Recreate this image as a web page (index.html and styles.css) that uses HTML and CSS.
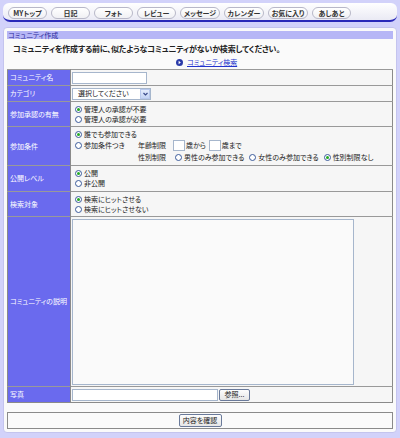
FILE: index.html
```html
<!DOCTYPE html>
<html lang="ja">
<head>
<meta charset="utf-8">
<link rel="stylesheet" href="styles.css">
</head>
<body>
<div class="nav">
  <span class="nb">MYトップ</span>
  <span class="nb">日記</span>
  <span class="nb">フォト</span>
  <span class="nb">レビュー</span>
  <span class="nb wide">メッセージ</span>
  <span class="nb wide">カレンダー</span>
  <span class="nb wide">お気に入り</span>
  <span class="nb">あしあと</span>
</div>
<div class="panel">
  <div class="title">コミュニティ作成</div>
  <p class="lead">コミュニティを作成する前に、似たようなコミュニティがないか検索してください。</p>
  <div class="search"><svg class="ico" width="7" height="7" viewBox="0 0 7 7"><circle cx="3.5" cy="3.5" r="3.5" fill="#2a3aa8"/><path d="M2.6 1.8 L4.8 3.5 L2.6 5.2 Z" fill="#fff"/></svg><a href="#">コミュニティ検索</a></div>
  <table class="form">
    <tr class="r16"><th>コミュニティ名</th><td><span class="txt w75"></span></td></tr>
    <tr class="r16"><th>カテゴリ</th><td><span class="sel">選択してください<span class="arr"><svg width="5" height="4" viewBox="0 0 5 4"><path d="M0.5 1 L2.5 3 L4.5 1" stroke="#3a4a8a" stroke-width="1.2" fill="none"/></svg></span></span></td></tr>
    <tr class="r25"><th>参加承認の有無</th><td>
      <div class="opt"><span class="rd on"></span>管理人の承認が不要</div>
      <div class="opt"><span class="rd"></span>管理人の承認が必要</div>
    </td></tr>
    <tr class="r39"><th>参加条件</th><td>
      <div class="opt"><span class="rd on"></span>誰でも参加できる</div>
      <div class="cond">
        <div class="opt c1"><span class="rd"></span>参加条件つき</div>
        <div class="sub">
          <div class="line"><span class="lbl">年齢制限</span><span class="txt w11"></span>歳から<span class="txt w11"></span>歳まで</div>
          <div class="line"><span class="lbl">性別制限</span><span class="opt"><span class="rd"></span>男性のみ参加できる</span><span class="opt"><span class="rd"></span>女性のみ参加できる</span><span class="opt"><span class="rd on"></span>性別制限なし</span></div>
        </div>
      </div>
    </td></tr>
    <tr class="r26"><th>公開レベル</th><td>
      <div class="opt"><span class="rd on"></span>公開</div>
      <div class="opt"><span class="rd"></span>非公開</div>
    </td></tr>
    <tr class="r25"><th>検索対象</th><td>
      <div class="opt"><span class="rd on"></span>検索にヒットさせる</div>
      <div class="opt"><span class="rd"></span>検索にヒットさせない</div>
    </td></tr>
    <tr class="r170"><th>コミュニティの説明</th><td><div class="area"></div></td></tr>
    <tr class="r16"><th>写真</th><td><div class="file"><span class="txt w146"></span><span class="btn">参照...</span></div></td></tr>
  </table>
  <div class="submit"><span class="btn">内容を確認</span></div>
</div>
</body>
</html>
```
FILE: styles.css
```css
* { box-sizing: border-box; }
html, body { margin: 0; padding: 0; }
body {
  background: #d2d2fa;
  font-family: "Noto Sans CJK JP", "Noto Sans", sans-serif;
  font-size: 7px;
  line-height: 1;
  color: #222;
  width: 400px;
  height: 438px;
  overflow: hidden;
  padding-top: 3px;
}
.nav {
  margin: 0 3px;
  height: 19px;
  background: linear-gradient(#ffffff, #eaeaf4);
  border-radius: 6px 6px 7px 7px;
  border-bottom: 2px solid #2a2ab8;
  display: flex;
  gap: 4px;
  padding: 4px 0 0 5px;
}
.nb {
  width: 39px;
  height: 12px;
  border: 1px solid #b8b8c8;
  border-radius: 6px;
  background: linear-gradient(#ffffff, #f0f0f4);
  font-weight: bold;
  font-size: 7px;
  color: #333;
  display: flex;
  align-items: center;
  justify-content: center;
  font-feature-settings: "palt";
}
.nb.wide { width: 40px; }
.panel {
  margin: 5px 3px 0;
  height: 406px;
  background: #fafafa;
  border: 1px solid #c4c4ee;
  border-radius: 4px;
  padding: 3px 3px 0 3px;
}
.title {
  height: 8px;
  background: #b6b6f6;
  color: #2a2a9a;
  font-size: 7px;
  line-height: 8px;
  padding-left: 1px;
  font-feature-settings: "palt";
}
.lead {
  margin: 5px 0 0 6px;
  font-size: 8px;
  line-height: 9px;
  font-weight: bold;
  color: #222;
  font-feature-settings: "palt";
  letter-spacing: -0.2px;
}
.search {
  margin-top: 5px;
  height: 8px;
  display: flex;
  align-items: center;
  padding-left: 169px;
  gap: 4px;
}
.search a {
  color: #2233cc;
  font-size: 7px;
  font-feature-settings: "palt";
}
.form {
  margin: 3px 0 0 0;
  width: 386px;
  border-collapse: collapse;
  border: 1px solid #8a8a8a;
}
.form th, .form td {
  border-top: 1px solid #999;
  padding: 0;
  vertical-align: middle;
}
.form th {
  width: 63px;
  background: #6a6aee;
  color: #fff;
  font-weight: normal;
  text-align: left;
  padding-left: 2px;
  font-size: 7px;
  font-feature-settings: "palt";
  border-right: 1px solid #8a8a8a;
}
.form td {
  background: #f6f6f6;
  padding-left: 1px;
}
.r16 { height: 16px; }
.r25 { height: 25px; }
.r26 { height: 26px; }
.r39 { height: 39px; }
.r170 { height: 170px; }
.txt {
  display: inline-block;
  height: 12px;
  background: #fff;
  border: 1px solid #a6b6cc;
  vertical-align: middle;
}
.w75 { width: 75px; }
.w11 { width: 12px; margin: 0 1px 0 3px; height: 11px; }
.w146 { width: 146px; }
.sel {
  display: inline-flex;
  align-items: center;
  width: 79px;
  height: 12px;
  border: 1px solid #a6b6cc;
  background: #fff;
  padding-left: 5px;
  position: relative;
  font-size: 7px;
  font-feature-settings: "palt";
}
.arr {
  position: absolute;
  right: 0;
  top: 0;
  width: 10px;
  height: 10px;
  background: linear-gradient(#e4ecfc, #c4d4f4);
  border: 1px solid #b8c8ec;
  display: flex;
  align-items: center;
  justify-content: center;
}
.opt {
  display: flex;
  align-items: center;
  height: 10px;
  padding-left: 3px;
  font-size: 7px;
  font-feature-settings: "palt";
  white-space: nowrap;
}
.rd {
  width: 7px;
  height: 7px;
  border-radius: 50%;
  border: 1px solid #3a5a9a;
  background: #fff;
  margin-right: 2px;
  flex: none;
  display: inline-flex;
  align-items: center;
  justify-content: center;
}
.rd.on::after {
  content: "";
  width: 3px;
  height: 3px;
  border-radius: 50%;
  background: #22aa22;
}
.cond {
  display: flex;
  align-items: flex-start;
}
.c1 { width: 66px; height: 13px; }
.sub { display: flex; flex-direction: column; }
.line {
  display: flex;
  align-items: center;
  height: 12px;
  white-space: nowrap;
  font-feature-settings: "palt";
}
.line .opt { padding-left: 5px; }
.lbl { width: 32px; }
.area {
  margin: 1px 0 0 0;
  width: 282px;
  height: 166px;
  background: #fafafa;
  border: 1px solid #a6b6cc;
}
.file { display: flex; align-items: center; }
.btn {
  display: inline-flex;
  align-items: center;
  justify-content: center;
  height: 12px;
  padding: 0 3px;
  border: 1px solid #6a7a9a;
  border-radius: 2px;
  background: linear-gradient(#fdfdfd, #e6e6e6);
  font-size: 7px;
  color: #222;
  font-feature-settings: "palt";
}
.file .btn { width: 31px; margin-left: 1px; }
.submit {
  margin: 9px 0 0 0;
  width: 386px;
  height: 17px;
  border: 1px solid #8a8a8a;
  background: #fafafa;
  display: flex;
  align-items: center;
  justify-content: center;
}
.submit .btn { width: 43px; height: 13px; }
```
